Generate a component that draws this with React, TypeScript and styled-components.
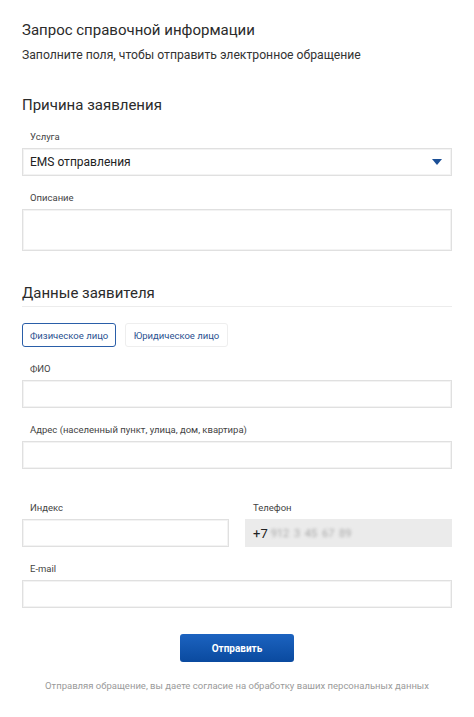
import React from "react";
import styled, { createGlobalStyle } from "styled-components";

const Global = createGlobalStyle`
  html, body { margin: 0; padding: 0; background: #fff; }
  body { font-family: Roboto, "Noto Sans", Arial, sans-serif; color: #333; }
  * { box-sizing: border-box; }
`;

const Page = styled.div`
  width: 474px;
  padding: 20px 22px 24px 22px;
  display: flex;
  flex-direction: column;
`;

const Title = styled.h1`
  margin: 0;
  font-size: 15px;
  line-height: 20px;
  font-weight: 400;
  color: #2b2b2b;
`;

const Subtitle = styled.p`
  margin: 7px 0 0 0;
  font-size: 12.2px;
  line-height: 16px;
  color: #333;
`;

const SectionTitle = styled.h2<{ $top: number; $divider?: boolean }>`
  margin: ${(p) => p.$top}px 0 0 0;
  font-size: 15px;
  line-height: 20px;
  font-weight: 400;
  color: #2b2b2b;
  padding-bottom: ${(p) => (p.$divider ? 3 : 0)}px;
  border-bottom: ${(p) => (p.$divider ? "1px solid #ececec" : "none")};
`;

const Field = styled.div<{ $top: number }>`
  margin-top: ${(p) => p.$top}px;
  display: flex;
  flex-direction: column;
  flex: 1;
`;

const Label = styled.label`
  padding-left: 8px;
  font-size: 9.5px;
  line-height: 14px;
  color: #444;
  margin-bottom: 4px;
`;

const Input = styled.div<{ $h?: number; $disabled?: boolean }>`
  height: ${(p) => p.$h ?? 28}px;
  border: ${(p) => (p.$disabled ? "1px solid #ebebeb" : "1px solid #e0e0e0")};
  box-shadow: ${(p) => (p.$disabled ? "none" : "inset 0 0 0 1px #f3f3f3")};
  background: ${(p) => (p.$disabled ? "#ebebeb" : "#fff")};
  display: flex;
  align-items: center;
  padding: 0 7px;
  font-size: 12px;
  color: #222;
`;

const Select = styled(Input)`
  justify-content: space-between;
  padding-right: 9px;
`;

const Arrow = styled.svg`
  width: 10px;
  height: 6px;
  display: block;
`;

const Toggles = styled.div`
  margin-top: 16px;
  display: flex;
  gap: 9px;
`;

const Toggle = styled.button<{ $active?: boolean }>`
  height: 24px;
  padding: 0 ${(p) => (p.$active ? 7 : 7.5)}px;
  border-radius: 3px;
  border: ${(p) => (p.$active ? "1.5px solid #2a5ea8" : "1px solid #eeeeee")};
  background: #fff;
  color: #2a5090;
  font-family: inherit;
  font-size: 9.5px;
  cursor: pointer;
`;

const Row = styled.div`
  margin-top: 32px;
  display: flex;
  gap: 16px;
`;

const Phone = styled.span`
  display: flex;
  align-items: center;
  gap: 1px;
  font-size: 13px;
`;

const Blurred = styled.span`
  color: #a8a8a8;
  filter: blur(1.4px);
  margin-left: 2px;
  font-size: 11px;
  word-spacing: 2px;
`;

const Actions = styled.div`
  margin-top: 26px;
  display: flex;
  flex-direction: column;
  align-items: center;
`;

const Submit = styled.button`
  width: 114px;
  height: 28px;
  border-radius: 3px;
  border: none;
  background: linear-gradient(#1c63c0, #0a4a9f);
  color: #fff;
  font-family: inherit;
  font-weight: 700;
  font-size: 10px;
`;

const Note = styled.p`
  margin: 17px 0 0 0;
  font-size: 9.5px;
  line-height: 14px;
  color: #9a9a9a;
  text-align: center;
`;

export default function App() {
  return (
    <>
      <Global />
      <Page>
        <Title>Запрос справочной информации</Title>
        <Subtitle>Заполните поля, чтобы отправить электронное обращение</Subtitle>

        <SectionTitle $top={32}>Причина заявления</SectionTitle>
        <Field $top={15}>
          <Label>Услуга</Label>
          <Select>
            <span>EMS отправления</span>
            <Arrow viewBox="0 0 10 6">
              <path d="M0 0 L10 0 L5 6 Z" fill="#1b4f96" />
            </Arrow>
          </Select>
        </Field>
        <Field $top={15}>
          <Label>Описание</Label>
          <Input $h={42} />
        </Field>

        <SectionTitle $top={32} $divider>
          Данные заявителя
        </SectionTitle>
        <Toggles>
          <Toggle $active>Физическое лицо</Toggle>
          <Toggle>Юридическое лицо</Toggle>
        </Toggles>
        <Field $top={15}>
          <Label>ФИО</Label>
          <Input />
        </Field>
        <Field $top={15}>
          <Label>Адрес (населенный пункт, улица, дом, квартира)</Label>
          <Input />
        </Field>
        <Row>
          <Field $top={0}>
            <Label>Индекс</Label>
            <Input />
          </Field>
          <Field $top={0}>
            <Label>Телефон</Label>
            <Input $disabled>
              <Phone>
                +7<Blurred>912 3 45 67 89</Blurred>
              </Phone>
            </Input>
          </Field>
        </Row>
        <Field $top={15}>
          <Label>E-mail</Label>
          <Input />
        </Field>

        <Actions>
          <Submit>Отправить</Submit>
          <Note>Отправляя обращение, вы даете согласие на обработку ваших персональных данных</Note>
        </Actions>
      </Page>
    </>
  );
}
